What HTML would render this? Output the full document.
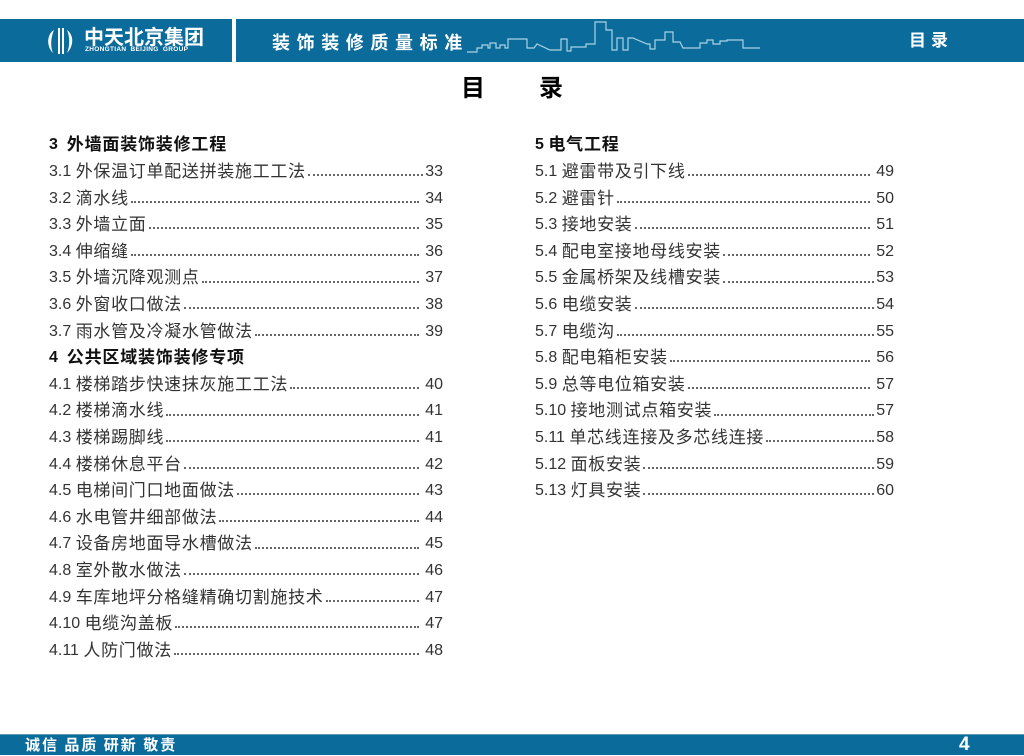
<!DOCTYPE html>
<html><head><meta charset="utf-8">
<style>
*{margin:0;padding:0;box-sizing:border-box}
body{width:1024px;height:755px;background:#fff;position:relative;overflow:hidden;font-family:"Liberation Sans","Noto Sans CJK SC",sans-serif;color:#222}
.bar{position:absolute;left:0;top:19px;width:1024px;height:43px;background:#0b6b9b}
.div1{position:absolute;left:232px;top:19px;width:4px;height:43px;background:#fff}
.foot{position:absolute;left:0;top:734px;width:1024px;height:21px;background:#0b6b9b;border-top:1px solid #5b9cbd}
.row{position:absolute;height:26.6px;display:flex;align-items:center;font-size:16px;line-height:26.6px;white-space:nowrap;color:#333}
.row .c{font-size:17px;letter-spacing:0.7px}
.row .f{flex:1;height:0;margin:0 2px;border-bottom:2px dotted #666;transform:translateY(3px)}
.h{font-weight:bold;color:#111}
.h .c{font-size:17px;letter-spacing:0.8px}
.L{left:49px;width:394px}
.R{left:535px;width:359px}
</style></head><body>
<div class="bar"></div>
<div class="div1"></div>
<svg style="position:absolute;left:45px;top:26px" width="32" height="30" viewBox="0 0 32 30">
<path d="M9 4 C2 8 1 20 8 27 C5 20 6 11 9 4Z" fill="#fff"/>
<path d="M13 2 L19 2 L19 28 L13 28 Z" fill="#fff"/>
<path d="M15 2 L17 2 L17 28 L15 28Z" fill="#0b6b9b"/>
<path d="M22 4 C29 9 29 20 22 27 C25 20 25 11 22 4Z" fill="#fff"/>
</svg>
<div style="position:absolute;left:84px;top:25px;color:#fff;font-weight:bold;font-size:20px;letter-spacing:0px;font-family:'Noto Sans CJK SC',sans-serif;line-height:22px">中天北京集团</div>
<div style="position:absolute;left:85px;top:46px;color:#fff;font-weight:bold;font-size:6.5px;letter-spacing:0.3px;line-height:8px">ZHONGTIAN&nbsp; BEIJING&nbsp; GROUP</div>
<div style="position:absolute;left:272px;top:30px;color:#fff;font-weight:bold;font-size:18px;letter-spacing:6.6px;line-height:24px;font-family:'Noto Sans CJK SC',sans-serif">装饰装修质量标准</div>
<svg style="position:absolute;left:0;top:0" width="1024" height="70">
<polyline fill="none" stroke="#a9d3e6" stroke-width="1.2" points="467,52 477,52 477,48 482,48 482,45 488,45 488,48 490,48 490,43 496,43 496,48 500,48 500,45 505,45 505,48 508,48 508,39 527,39 527,48 534,48 537,44 550,50 561,50 561,39 567,39 567,51 571,51 571,47 586,47 586,44 595,44 595,22 606,22 606,30 612,30 612,50 617,50 617,38 623,38 623,50 628,50 628,38 633,38 647,44 650,44 650,49 655,49 655,40 665,40 665,32 673,32 673,42 680,42 683,48 700,48 700,43 707,43 707,40 713,40 713,44 720,44 720,41 727,41 727,40 743,40 743,48 760,48"/>
</svg>
<div style="position:absolute;left:909px;top:27px;color:#fff;font-weight:bold;font-size:17px;letter-spacing:5px;line-height:24px;font-family:'Noto Sans CJK SC',sans-serif">目录</div>
<div style="position:absolute;left:461px;top:70px;font-weight:bold;font-size:24px;line-height:32px;letter-spacing:0;font-family:'Noto Sans CJK SC',sans-serif;color:#000">目<span style="display:inline-block;width:54px"></span>录</div>

<div class="row L h" style="top:132px">3&nbsp;&nbsp;<span class="c">外墙面装饰装修工程</span></div>
<div class="row L" style="top:159px">3.1&nbsp;<span class="c">外保温订单配送拼装施工工法</span><span class="f"></span>33</div>
<div class="row L" style="top:185.6px">3.2&nbsp;<span class="c">滴水线</span><span class="f"></span>&nbsp;34</div>
<div class="row L" style="top:212.2px">3.3&nbsp;<span class="c">外墙立面</span><span class="f"></span>&nbsp;35</div>
<div class="row L" style="top:238.8px">3.4&nbsp;<span class="c">伸缩缝</span><span class="f"></span>&nbsp;36</div>
<div class="row L" style="top:265.4px">3.5&nbsp;<span class="c">外墙沉降观测点</span><span class="f"></span>&nbsp;37</div>
<div class="row L" style="top:292px">3.6&nbsp;<span class="c">外窗收口做法</span><span class="f"></span>&nbsp;38</div>
<div class="row L" style="top:318.6px">3.7&nbsp;<span class="c">雨水管及冷凝水管做法</span><span class="f"></span>&nbsp;39</div>
<div class="row L h" style="top:345.2px">4&nbsp;&nbsp;<span class="c">公共区域装饰装修专项</span></div>
<div class="row L" style="top:371.8px">4.1&nbsp;<span class="c">楼梯踏步快速抹灰施工工法</span><span class="f"></span>&nbsp;40</div>
<div class="row L" style="top:398.4px">4.2&nbsp;<span class="c">楼梯滴水线</span><span class="f"></span>&nbsp;41</div>
<div class="row L" style="top:425px">4.3&nbsp;<span class="c">楼梯踢脚线</span><span class="f"></span>&nbsp;41</div>
<div class="row L" style="top:451.6px">4.4&nbsp;<span class="c">楼梯休息平台</span><span class="f"></span>&nbsp;42</div>
<div class="row L" style="top:478.2px">4.5&nbsp;<span class="c">电梯间门口地面做法</span><span class="f"></span>&nbsp;43</div>
<div class="row L" style="top:504.8px">4.6&nbsp;<span class="c">水电管井细部做法</span><span class="f"></span>&nbsp;44</div>
<div class="row L" style="top:531.4px">4.7&nbsp;<span class="c">设备房地面导水槽做法</span><span class="f"></span>&nbsp;45</div>
<div class="row L" style="top:558px">4.8&nbsp;<span class="c">室外散水做法</span><span class="f"></span>&nbsp;46</div>
<div class="row L" style="top:584.6px">4.9&nbsp;<span class="c">车库地坪分格缝精确切割施技术</span><span class="f"></span>&nbsp;47</div>
<div class="row L" style="top:611.2px">4.10&nbsp;<span class="c">电缆沟盖板</span><span class="f"></span>&nbsp;47</div>
<div class="row L" style="top:637.8px">4.11&nbsp;<span class="c">人防门做法</span><span class="f"></span>&nbsp;48</div>

<div class="row R h" style="top:132px">5&nbsp;<span class="c">电气工程</span></div>
<div class="row R" style="top:159px">5.1&nbsp;<span class="c">避雷带及引下线</span><span class="f"></span>&nbsp;49</div>
<div class="row R" style="top:185.6px">5.2&nbsp;<span class="c">避雷针</span><span class="f"></span>&nbsp;50</div>
<div class="row R" style="top:212.2px">5.3&nbsp;<span class="c">接地安装</span><span class="f"></span>&nbsp;51</div>
<div class="row R" style="top:238.8px">5.4&nbsp;<span class="c">配电室接地母线安装</span><span class="f"></span>&nbsp;52</div>
<div class="row R" style="top:265.4px">5.5&nbsp;<span class="c">金属桥架及线槽安装</span><span class="f"></span>53</div>
<div class="row R" style="top:292px">5.6&nbsp;<span class="c">电缆安装</span><span class="f"></span>54</div>
<div class="row R" style="top:318.6px">5.7&nbsp;<span class="c">电缆沟</span><span class="f"></span>55</div>
<div class="row R" style="top:345.2px">5.8&nbsp;<span class="c">配电箱柜安装</span><span class="f"></span>&nbsp;56</div>
<div class="row R" style="top:371.8px">5.9&nbsp;<span class="c">总等电位箱安装</span><span class="f"></span>&nbsp;57</div>
<div class="row R" style="top:398.4px">5.10&nbsp;<span class="c">接地测试点箱安装</span><span class="f"></span>57</div>
<div class="row R" style="top:425px">5.11&nbsp;<span class="c">单芯线连接及多芯线连接</span><span class="f"></span>58</div>
<div class="row R" style="top:451.6px">5.12&nbsp;<span class="c">面板安装</span><span class="f"></span>59</div>
<div class="row R" style="top:478.2px">5.13&nbsp;<span class="c">灯具安装</span><span class="f"></span>60</div>

<div class="foot"></div>
<div style="position:absolute;left:25px;top:736px;color:#fff;font-weight:bold;font-size:15px;line-height:18px;letter-spacing:2px;font-family:'Noto Sans CJK SC',sans-serif">诚信 品质 研新 敬责</div>
<div style="position:absolute;left:959px;top:734px;color:#fff;font-weight:bold;font-size:19px;line-height:22px">4</div>
</body></html>
